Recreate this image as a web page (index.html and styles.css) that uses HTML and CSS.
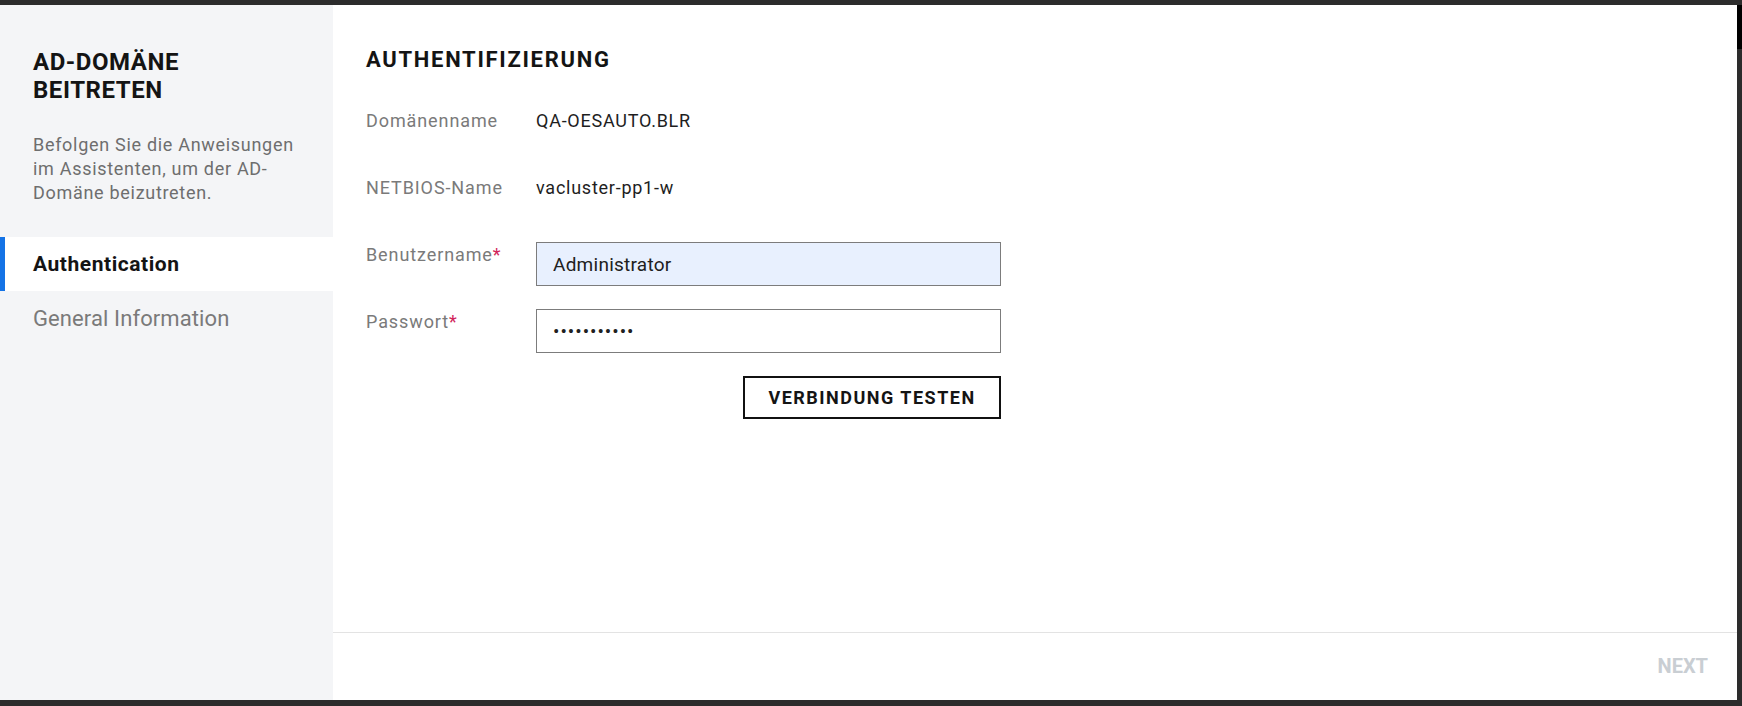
FILE: index.html
```html
<!DOCTYPE html>
<html lang="de">
<head>
<meta charset="utf-8">
<title>AD-Domäne beitreten</title>
<link rel="stylesheet" href="styles.css">
</head>
<body>
<div class="screen">
  <div class="dialog">
    <aside class="sidebar">
      <h1 class="side-title">AD-DOMÄNE BEITRETEN</h1>
      <p class="side-desc">Befolgen Sie die Anweisungen im Assistenten, um der AD-Domäne beizutreten.</p>
      <nav class="steps">
        <div class="step active">Authentication</div>
        <div class="step">General Information</div>
      </nav>
    </aside>
    <main class="main">
      <section class="content">
        <h2 class="section-title">AUTHENTIFIZIERUNG</h2>
        <div class="row text-row first">
          <div class="label">Domänenname</div>
          <div class="value">QA-OESAUTO.BLR</div>
        </div>
        <div class="row text-row">
          <div class="label">NETBIOS-Name</div>
          <div class="value">vacluster-pp1-w</div>
        </div>
        <div class="row field-row user-row">
          <label class="label field-label" for="user">Benutzername<span class="req">*</span></label>
          <input id="user" class="input autofill" type="text" value="Administrator">
        </div>
        <div class="row field-row">
          <label class="label field-label" for="pass">Passwort<span class="req">*</span></label>
          <input id="pass" class="input" type="password" value="secretpassw">
        </div>
        <div class="row button-row">
          <button class="btn-outline" type="button">VERBINDUNG TESTEN</button>
        </div>
      </section>
      <footer class="footer">
        <button class="btn-next" type="button" disabled>NEXT</button>
      </footer>
    </main>
  </div>
  <div class="edge">
    <div class="edge-bar"></div>
  </div>
</div>
</body>
</html>
```

FILE: styles.css
```css
* { box-sizing: border-box; }
html, body { margin: 0; padding: 0; }
body {
  background: #2c2c2c;
  font-family: Roboto, "Liberation Sans", Arial, sans-serif;
  width: 1742px;
  height: 706px;
  overflow: hidden;
}
.screen {
  display: flex;
  padding-top: 5px;
  height: 700px;
}
.dialog {
  display: flex;
  width: 1737px;
  height: 695px;
  background: #ffffff;
}
.edge {
  width: 5px;
}
.edge-bar {
  height: 44px;
  background: #000000;
}
.sidebar {
  width: 333px;
  flex: 0 0 333px;
  background: #f4f5f7;
  padding-top: 43px;
}
.side-title {
  margin: 0;
  padding: 0 33px;
  font-size: 24px;
  line-height: 28px;
  font-weight: 700;
  letter-spacing: 0.55px;
  color: #141414;
}
.side-desc {
  margin: 29px 0 0;
  padding: 0 28px 0 33px;
  font-size: 18px;
  line-height: 24px;
  letter-spacing: 0.7px;
  color: #6e6e6e;
}
.steps {
  margin-top: 32px;
}
.step {
  height: 54px;
  display: flex;
  align-items: center;
  padding-left: 33px;
  font-size: 22px;
  letter-spacing: 0.1px;
  color: #7a7a7a;
}
.step.active {
  background: #ffffff;
  color: #141414;
  font-weight: 700;
  font-size: 21px;
  letter-spacing: 0.55px;
  border-left: 5px solid #1473e6;
  padding-left: 28px;
}
.main {
  flex: 1;
  display: flex;
  flex-direction: column;
}
.content {
  flex: 1;
  padding: 42px 33px 0;
  border-bottom: 1px solid #e3e3e3;
}
.section-title {
  margin: 0;
  font-size: 22px;
  line-height: 26px;
  font-weight: 700;
  letter-spacing: 1.7px;
  color: #141414;
}
.row {
  display: flex;
  align-items: flex-start;
}
.label {
  width: 170px;
  flex: 0 0 170px;
  font-size: 18px;
  line-height: 21px;
  letter-spacing: 0.9px;
  color: #7a7a7a;
}
.value {
  font-size: 18px;
  line-height: 21px;
  letter-spacing: 0.75px;
  color: #1e1e1e;
}
.text-row.first { margin-top: 37px; }
.text-row { margin-top: 46px; }
.user-row { margin-top: 44px; }
.field-row + .field-row { margin-top: 23px; }
.field-label { padding-top: 2px; }
.req { color: #d1245a; }
.input {
  width: 465px;
  height: 44px;
  border: 1px solid #7c7c7c;
  border-radius: 0;
  padding: 0 16px;
  font-family: Roboto, "Liberation Sans", Arial, sans-serif;
  font-size: 19px;
  letter-spacing: 0.25px;
  color: #202020;
  background: #ffffff;
  outline: none;
}
.input.autofill { background: #e8f0fe; }
.input[type="password"] { letter-spacing: 1px; }
.button-row {
  margin-top: 23px;
  width: 635px;
  justify-content: flex-end;
}
.btn-outline {
  width: 258px;
  height: 43px;
  background: #ffffff;
  border: 2px solid #111111;
  border-radius: 0;
  font-family: Roboto, "Liberation Sans", Arial, sans-serif;
  font-size: 18px;
  font-weight: 700;
  letter-spacing: 1.5px;
  color: #141414;
  padding: 0;
}
.footer {
  height: 67px;
  display: flex;
  align-items: center;
  justify-content: flex-end;
  padding-right: 29px;
}
.btn-next {
  background: none;
  border: 0;
  padding: 0 0 2px;
  font-family: Roboto, "Liberation Sans", Arial, sans-serif;
  font-size: 20px;
  font-weight: 700;
  color: #c9ced3;
}
```
